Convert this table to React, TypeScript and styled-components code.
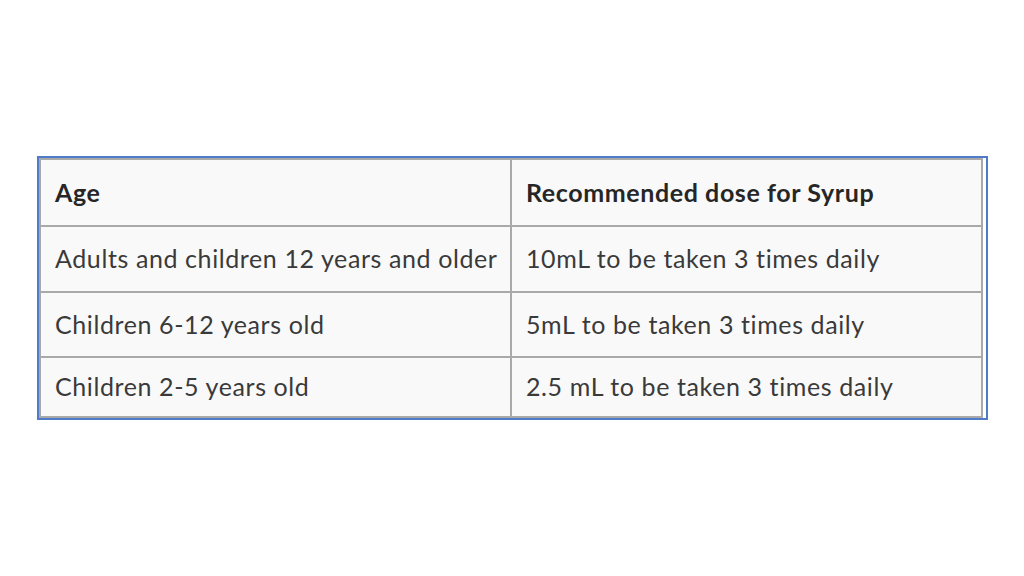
import React from "react";
import styled, { createGlobalStyle } from "styled-components";

const Global = createGlobalStyle`
  html, body { margin: 0; padding: 0; background: #ffffff; }
  body { font-family: Lato, "Open Sans", sans-serif; }
`;

const Page = styled.div`
  width: 1024px;
  height: 576px;
  box-sizing: border-box;
  padding: 156px 0 0 37px;
  background: #ffffff;
`;

const Frame = styled.div`
  width: 951px;
  box-sizing: border-box;
  border: 2px solid #4f7cc9;
  padding: 0 3px 0 0;
  background: #ffffff;
`;

const Table = styled.table`
  width: 100%;
  border-collapse: collapse;
  table-layout: fixed;
  background: #f9f9f9;
  border: 2px solid #a9a9a9;
`;

const Row = styled.tr<{ $h: number }>`
  height: ${(p) => p.$h}px;
`;

const Cell = styled.td<{ $head?: boolean }>`
  border: 2px solid #a9a9a9;
  padding: 0 0 2px 14px;
  font-family: Lato, "Open Sans", sans-serif;
  font-size: 25px;
  letter-spacing: 0.6px;
  font-variant-ligatures: none;
  font-weight: ${(p) => (p.$head ? 700 : 400)};
  color: ${(p) => (p.$head ? "#262626" : "#3a3a3a")};
  vertical-align: middle;
  white-space: nowrap;
  width: 50%;
`;

const rows: [string, string, number][] = [
  ["Adults and children 12 years and older", "10mL to be taken 3 times daily", 66],
  ["Children 6-12 years old", "5mL to be taken 3 times daily", 65],
  ["Children 2-5 years old", "2.5 mL to be taken 3 times daily", 60],
];

export default function App() {
  return (
    <>
      <Global />
      <Page>
        <Frame>
          <Table>
            <tbody>
              <Row $h={67}>
                <Cell $head>Age</Cell>
                <Cell $head>Recommended dose for Syrup</Cell>
              </Row>
              {rows.map(([a, b, h]) => (
                <Row key={a} $h={h}>
                  <Cell>{a}</Cell>
                  <Cell>{b}</Cell>
                </Row>
              ))}
            </tbody>
          </Table>
        </Frame>
      </Page>
    </>
  );
}
